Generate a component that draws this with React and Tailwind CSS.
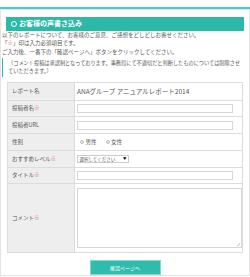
const ROWS = [
  { label: 'レポート名', h: 'h-[18px]', type: 'text' },
  { label: '投稿者名', req: true, h: 'h-[16px]', type: 'input' },
  { label: '投稿者URL', h: 'h-[17px]', type: 'input' },
  { label: '性別', h: 'h-[17px]', type: 'radio' },
  { label: 'おすすめレベル', req: true, h: 'h-[17px]', type: 'select' },
  { label: 'タイトル', req: true, h: 'h-[16px]', type: 'input' },
  { label: 'コメント', req: true, h: 'h-[69px]', type: 'textarea' },
]

function Field({ type }) {
  if (type === 'text') {
    return <span className="text-[6.5px] text-[#555]">ANAグループ アニュアルレポート2014</span>
  }
  if (type === 'input') {
    return <div className="w-[156px] h-[9px] border border-[#d6d6d6] bg-white" />
  }
  if (type === 'radio') {
    return (
      <div className="flex items-center text-[5.5px] text-[#555]">
        <span className="w-[4px] h-[4px] rounded-full border border-[#bbb] bg-[#eee] ml-[3px] mr-[1.5px]" />
        <span>男性</span>
        <span className="w-[4px] h-[4px] rounded-full border border-[#bbb] bg-[#eee] ml-[9px] mr-[1.5px]" />
        <span>女性</span>
      </div>
    )
  }
  if (type === 'select') {
    return (
      <div className="w-[52px] h-[8px] border border-[#ccc] bg-white flex items-center justify-between px-[1.5px] text-[4.5px] text-[#555]">
        <span>選択してください</span>
        <span className="text-[3.5px] text-black">▼</span>
      </div>
    )
  }
  return (
    <div className="relative w-[165px] h-[60px] border border-[#d6d6d6] bg-white">
      <svg className="absolute right-[1px] bottom-[1px]" width="3" height="3" viewBox="0 0 3 3">
        <path d="M0 3L3 0M1.5 3L3 1.5" stroke="#aaa" strokeWidth="0.6" />
      </svg>
    </div>
  )
}

export default function App() {
  return (
    <div className="w-[250px] h-[277px] bg-white overflow-hidden" style={{ fontFamily: '"Noto Sans CJK JP", "Noto Sans", sans-serif' }}>
      <div className="h-[7px]" />
      <div className="h-[2px] bg-[#41cfe0]" />
      <div className="h-[267px] border border-[#e3e3e3] flex flex-col">
        {/* heading */}
        <div className="mt-[7px] mx-[5px] h-[14px] bg-[#2db9a8] flex items-center pl-[5px] gap-[2px]">
          <span className="w-[6px] h-[6px] rounded-full border-[1.2px] border-white" />
          <span className="text-[7px] font-bold text-white leading-none">お客様の声書き込み</span>
        </div>

        <div className="pl-[1px] text-[5.5px] leading-[8.4px] text-[#555]">
          <p>以下のレポートについて、お客様のご意見、ご感想をどしどしお寄せください。</p>
          <p>「<span className="text-[#f25a5a]">※</span>」印は入力必須項目です。</p>
          <p>ご入力後、一番下の「確認ページへ」ボタンをクリックしてください。</p>
        </div>

        <div className="mt-[2px] ml-[1px] border-l-[1.5px] border-[#2db9a8] pl-[5px] pt-[1px] h-[19px] text-[5.2px] leading-[8px] text-[#555] whitespace-nowrap">
          <p>（コメント投稿は承認制となっております。事務局にて不適切だと判断したものについては削除させ</p>
          <p>ていただきます。）</p>
        </div>

        {/* form table */}
        <div className="mt-[5px] ml-[6px] w-[236px] border border-[#dcdcdc] border-b-0">
          {ROWS.map(r => (
            <div key={r.label} className={`flex border-b border-[#dcdcdc] ${r.h}`}>
              <div className="w-[67px] bg-[#eeeeee] border-r border-[#dcdcdc] flex items-center pl-[4px] text-[5.5px] text-[#555]">
                {r.label}
                {r.req && <span className="text-[#f25a5a]">※</span>}
              </div>
              <div className="flex-1 flex items-center pl-[2px]">
                <Field type={r.type} />
              </div>
            </div>
          ))}
        </div>

        <div className="mt-[7px] flex justify-center">
          <div className="w-[71px] h-[15px] bg-[#2fbcac] border border-[#7fdad0] flex items-center justify-center text-[5px] text-white">
            確認ページへ
          </div>
        </div>
      </div>
    </div>
  )
}
